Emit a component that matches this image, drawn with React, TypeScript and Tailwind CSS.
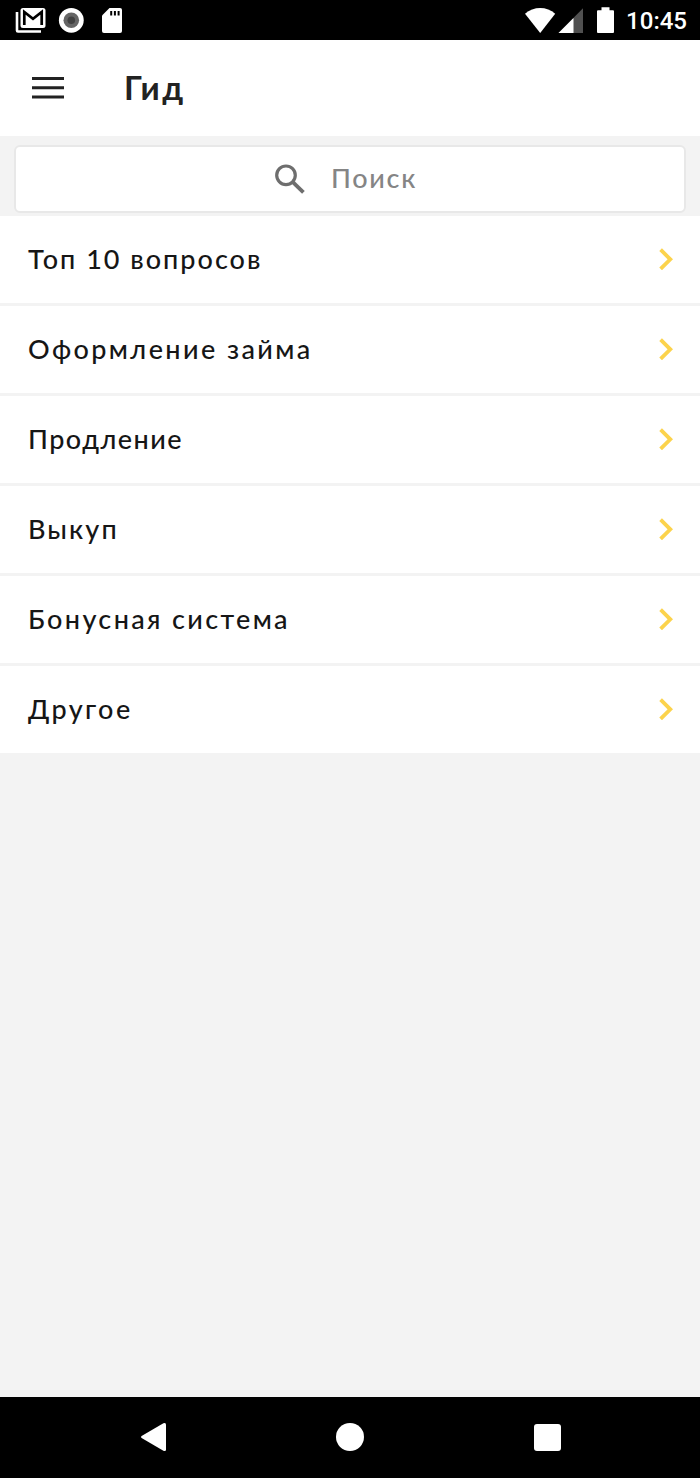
type Topic = {
  title: string;
  tracking: string;
};

// Tracking is tuned per row so that every title keeps its intended width.
const topics: Topic[] = [
  { title: "Топ 10 вопросов", tracking: "tracking-[2px]" },
  { title: "Оформление займа", tracking: "tracking-[2.4px]" },
  { title: "Продление", tracking: "tracking-[1.45px]" },
  { title: "Выкуп", tracking: "tracking-[2.1px]" },
  { title: "Бонусная система", tracking: "tracking-[2.35px]" },
  { title: "Другое", tracking: "tracking-[2.4px]" }
];

export default function App() {
  return (
    <div className="flex h-[1478px] w-[700px] flex-col overflow-hidden bg-[#f3f3f3] font-['Lato','Noto_Sans',sans-serif]">
      <StatusBar />
      <header className="flex h-24 shrink-0 items-center bg-white pl-8">
        <button type="button" aria-label="Меню">
          <svg width="32" height="24" viewBox="0 0 32 24" fill="#222" className="block">
            <path d="M0 1h32v3H0zM0 10.3h32v3H0zM0 19.6h32v3H0z" />
          </svg>
        </button>
        <h1 className="ml-[60px] pb-0.5 text-[33px] leading-none font-bold tracking-[2.5px] text-[#222]">Гид</h1>
      </header>
      <div className="h-20 shrink-0 px-3.5 pt-[9px]">
        <div className="flex h-[68px] items-center rounded-md border-2 border-[#e8e8e8] bg-white pl-[257px]">
          <svg width="32" height="32" viewBox="0 0 32 32" fill="none" stroke="#6e6e6e" className="block">
            <circle cx="13" cy="12.3" r="9.3" strokeWidth="3.2" />
            <path d="M19.6 18.8 30.4 29.4" strokeWidth="3.8" />
          </svg>
          <span className="ml-[26px] pb-[3px] text-[27px] leading-none font-medium tracking-[1.7px] text-[#858585]">
            Поиск
          </span>
        </div>
      </div>
      <ul className="flex flex-col gap-[3px]">
        {topics.map(topic => (
          <TopicRow key={topic.title} topic={topic} />
        ))}
      </ul>
      <NavigationBar />
    </div>
  );
}

function TopicRow({ topic }: { topic: Topic }) {
  return (
    <li>
      <button type="button" className="flex h-[87px] w-full items-center justify-between bg-white pr-[27px] pb-px pl-7">
        <span className={`pb-px text-[27px] leading-none font-medium text-[#161616] ${topic.tracking}`}>
          {topic.title}
        </span>
        <svg width="14" height="22" viewBox="0 0 14 22" fill="none" stroke="#fcd34c" strokeWidth="3.8" className="block">
          <path d="m1.6 1.7 9.7 9.6-9.7 9.6" />
        </svg>
      </button>
    </li>
  );
}

function StatusBar() {
  return (
    <div className="flex h-10 shrink-0 items-center justify-between bg-black pr-[13px] pl-[15px] text-white">
      <div className="flex items-center">
        <svg width="32" height="28" viewBox="0 0 32 28" className="block">
          <path d="M2 6v18.5a1 1 0 0 0 1 1h23" fill="none" stroke="#fff" strokeWidth="2.6" />
          <rect x="5.5" y="2" width="25" height="20" rx="2.5" fill="#fff" />
          <path d="M9.3 19V6l8.7 6.8L26.7 6v13" fill="none" stroke="#000" strokeWidth="2.7" />
        </svg>
        <svg width="26" height="26" viewBox="0 0 26 26" className="ml-[11px] block">
          <circle cx="13.3" cy="13.3" r="12.4" fill="#fff" />
          <circle cx="13.3" cy="13.3" r="7.8" fill="#666" />
          <circle cx="13.3" cy="13.3" r="3.8" fill="#424242" />
        </svg>
        <svg width="20" height="26" viewBox="0 0 20 26" className="ml-[18px] block">
          <path d="M7.5 1H18A2 2 0 0 1 20 3v21a2 2 0 0 1-2 2H2a2 2 0 0 1-2-2V8.5z" fill="#fff" />
          <path d="M8.2 4h2v4.6h-2zM11.9 4h2v4.6h-2zM15.6 4h2v4.6h-2z" fill="#000" />
        </svg>
      </div>
      <div className="flex items-center">
        <svg width="32" height="26" viewBox="0 0 32 26" fill="#fff" className="block">
          <path d="M1 6.8C9.5-1 23-1 31.2 6.8L16.2 26z" />
        </svg>
        <svg width="25" height="26" viewBox="0 0 25 26" className="ml-0.5 block">
          <path d="M25 1.3V26H.5z" fill="#505050" />
          <path d="M15.5 10.9V26H.5z" fill="#fff" />
        </svg>
        <svg width="17" height="26" viewBox="0 0 17 26" fill="#fff" className="ml-3.5 block">
          <path d="M4.5.3h8v3H16a1 1 0 0 1 1 1V25a1 1 0 0 1-1 1H1a1 1 0 0 1-1-1V4.3a1 1 0 0 1 1-1h3.5z" />
        </svg>
        <span className="ml-3 pt-0.5 font-['Roboto',sans-serif] text-[24px] leading-none font-medium">10:45</span>
      </div>
    </div>
  );
}

function NavigationBar() {
  return (
    <nav className="mt-auto flex h-[81px] shrink-0 items-center bg-black pb-px pl-[140px]">
      <svg width="26" height="30" viewBox="0 0 26 30" fill="#fff" className="block">
        <path d="M1.6 14.1 23.4 1.2Q26 .2 26 2.6v24.8q0 2.4-2.6 1.4L1.6 16q-1.5-1 0-1.9z" />
      </svg>
      <div className="ml-[170px] h-7 w-7 rounded-full bg-white" />
      <div className="ml-[170px] size-[27px] rounded-[3px] bg-white" />
    </nav>
  );
}
